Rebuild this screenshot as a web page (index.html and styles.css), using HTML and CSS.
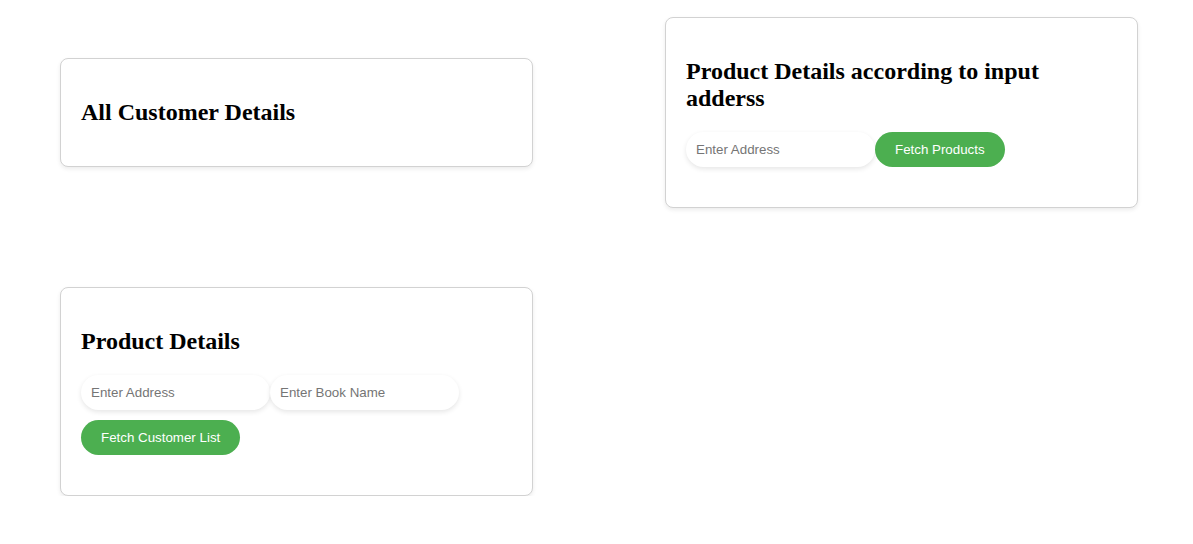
FILE: index.html
```html
<!DOCTYPE html>
<html>
<head>
<meta charset="utf-8">
<link rel="stylesheet" href="styles.css">
</head>
<body>
<div class="grid">
  <div class="card">
    <h2 class="title">All Customer Details</h2>
  </div>
  <div class="card">
    <h2 class="title">Product Details according to input adderss</h2>
    <div class="row row-last">
      <input class="field" type="text" placeholder="Enter Address">
      <button class="btn">Fetch Products</button>
    </div>
  </div>
  <div class="card">
    <h2 class="title">Product Details</h2>
    <div class="row">
      <input class="field" type="text" placeholder="Enter Address">
      <input class="field" type="text" placeholder="Enter Book Name">
    </div>
    <div class="row row-btn">
      <button class="btn">Fetch Customer List</button>
    </div>
  </div>
</div>
</body>
</html>
```
FILE: styles.css
```css
html, body {
  margin: 0;
  padding: 0;
  background: #ffffff;
}

body {
  font-family: "Liberation Serif", "Times New Roman", serif;
  color: #000;
}

.grid {
  display: grid;
  grid-template-columns: 473px 473px;
  column-gap: 132px;
  row-gap: 79px;
  padding: 17px 0 0 60px;
  align-items: center;
}

.card {
  box-sizing: border-box;
  width: 473px;
  padding: 20px;
  border: 1px solid #d2d2d2;
  border-radius: 8px;
  box-shadow: 0 2px 4px rgba(0, 0, 0, 0.08);
  background: #fff;
}

.title {
  font-size: 24px;
  font-weight: bold;
  margin: 20px 0;
}

.row {
  display: flex;
  align-items: center;
}

.row-last {
  margin-bottom: 20px;
}

.row-btn {
  margin-top: 10px;
  margin-bottom: 20px;
}

.field {
  box-sizing: border-box;
  width: 189px;
  height: 35px;
  padding: 10px;
  border: none;
  border-radius: 18px;
  font-family: "Liberation Sans", Arial, sans-serif;
  font-size: 13.33px;
  color: #333;
  background: #fff;
  box-shadow: 0 2px 5px rgba(0, 0, 0, 0.1);
  outline: none;
}

.field::placeholder {
  color: #757575;
}

.btn {
  height: 35px;
  padding: 0 20px;
  border: none;
  border-radius: 18px;
  background: #4caf50;
  color: #fff;
  font-family: "Liberation Sans", Arial, sans-serif;
  font-size: 13.33px;
  cursor: pointer;
}
```
